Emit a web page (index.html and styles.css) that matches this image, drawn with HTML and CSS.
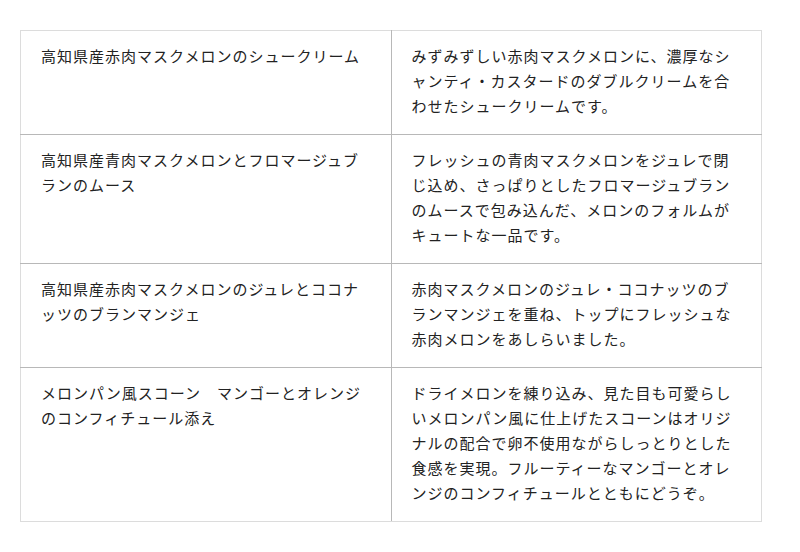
FILE: index.html
```html
<!DOCTYPE html>
<html lang="ja">
<head>
<meta charset="utf-8">
<link rel="stylesheet" href="styles.css">
</head>
<body>
<table class="menu">
  <tr>
    <td class="name">高知県産赤肉マスクメロンのシュークリーム</td>
    <td class="desc">みずみずしい赤肉マスクメロンに、濃厚なシャンティ・カスタードのダブルクリームを合わせたシュークリームです。</td>
  </tr>
  <tr>
    <td class="name">高知県産青肉マスクメロンとフロマージュブランのムース</td>
    <td class="desc">フレッシュの青肉マスクメロンをジュレで閉じ込め、さっぱりとしたフロマージュブランのムースで包み込んだ、メロンのフォルムがキュートな一品です。</td>
  </tr>
  <tr>
    <td class="name">高知県産赤肉マスクメロンのジュレとココナッツのブランマンジェ</td>
    <td class="desc">赤肉マスクメロンのジュレ・ココナッツのブランマンジェを重ね、トップにフレッシュな赤肉メロンをあしらいました。</td>
  </tr>
  <tr>
    <td class="name">メロンパン風スコーン　マンゴーとオレンジのコンフィチュール添え</td>
    <td class="desc">ドライメロンを練り込み、見た目も可愛らしいメロンパン風に仕上げたスコーンはオリジナルの配合で卵不使用ながらしっとりとした食感を実現。フルーティーなマンゴーとオレンジのコンフィチュールとともにどうぞ。</td>
  </tr>
</table>
</body>
</html>
```

FILE: styles.css
```css
html, body {
  margin: 0;
  padding: 0;
  background: #fff;
}
body {
  padding: 30px 20px;
  font-family: "Noto Sans CJK JP", "Noto Sans", sans-serif;
  color: #222;
}
.menu {
  width: 742px;
  border-collapse: collapse;
  table-layout: fixed;
}
.menu td {
  width: 50%;
  vertical-align: top;
  padding: 12px 20px 16px 20px;
  font-size: 15px;
  line-height: 25px;
  letter-spacing: 1px;
  border: 1px solid #b8b8b8;
}
.menu tr:first-child td { border-top-color: #dcdcdc; }
.menu tr:last-child td { border-bottom-color: #dcdcdc; }
.menu td.name { border-left-color: #dcdcdc; }
.menu td.desc { border-right-color: #dcdcdc; }
```
